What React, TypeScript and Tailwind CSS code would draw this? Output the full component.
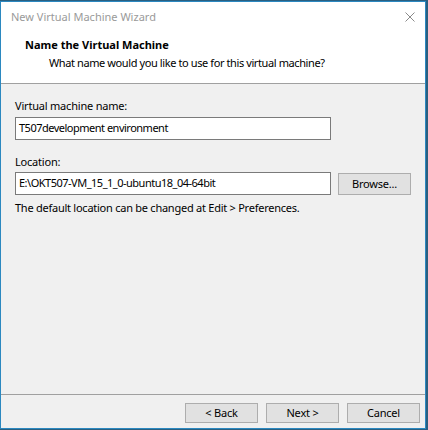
import React from "react";

const font = { fontFamily: '"Noto Sans", "Open Sans", Arial, sans-serif' };

function WinButton({ children, className = "" }: { children: React.ReactNode; className?: string }) {
  return (
    <div
      className={
        "flex items-center justify-center border border-[#adadad] bg-[#e1e1e1] text-[11px] tracking-[-0.2px] text-black " +
        className
      }
    >
      {children}
    </div>
  );
}

export default function App() {
  return (
    <div className="w-[428px] h-[430px] bg-[#2a5f80] pt-[1px]" style={font}>
      <div className="w-[426px] h-[428px] border border-[#2b88c0] flex flex-col bg-[#f0f0f0]">
        {/* Title bar */}
        <div className="h-[30px] bg-white flex items-center justify-between pl-[10px] pr-[8px] shrink-0">
          <span className="text-[11px] text-[#9a9a9a]">New Virtual Machine Wizard</span>
          <svg width="10" height="10" viewBox="0 0 10 10" className="mr-[2px]">
            <path d="M0.5 0.5 L9.5 9.5 M9.5 0.5 L0.5 9.5" stroke="#8a8a8a" strokeWidth="1" fill="none" />
          </svg>
        </div>
        {/* Header */}
        <div className="h-[51px] bg-white shrink-0 pt-[5px] pl-[24px]">
          <div className="text-[11px] font-bold text-black leading-[16px]">Name the Virtual Machine</div>
          <div className="text-[11px] text-black leading-[16px] mt-[2px] pl-[24px] tracking-[-0.4px]">
            What name would you like to use for this virtual machine?
          </div>
        </div>
        <div className="h-[1px] bg-[#a0a0a0] shrink-0" />
        {/* Body */}
        <div className="flex-1 flex flex-col pl-[14px] text-[11px] text-black tracking-[-0.2px]">
          <div className="mt-[14px] leading-[16px]">Virtual machine name:</div>
          <div className="mt-[3px] w-[316px] h-[23px] border border-[#7a7a7a] bg-white flex items-center pl-[3px] tracking-[-0.5px]">
            T507development environment
          </div>
          <div className="mt-[14px] leading-[16px]">Location:</div>
          <div className="mt-[2px] flex items-start gap-[7px]">
            <div className="w-[316px] h-[23px] border border-[#7a7a7a] bg-white flex items-center pl-[3px] tracking-[-0.5px]">
              E:\OKT507-VM_15_1_0-ubuntu18_04-64bit
            </div>
            <WinButton className="w-[73px] h-[22px] mt-[1px]">Browse...</WinButton>
          </div>
          <div className="mt-[5px] leading-[16px] tracking-[-0.25px]">The default location can be changed at Edit &gt; Preferences.</div>
        </div>
        {/* Footer */}
        <div className="h-[1px] bg-[#a0a0a0] shrink-0" />
        <div className="h-[33px] shrink-0 flex items-start justify-end gap-[8px] pt-[8px] pr-[5px]">
          <WinButton className="w-[73px] h-[20px]">&lt; Back</WinButton>
          <WinButton className="w-[73px] h-[20px]">Next &gt;</WinButton>
          <WinButton className="w-[73px] h-[20px]">Cancel</WinButton>
        </div>
      </div>
    </div>
  );
}
